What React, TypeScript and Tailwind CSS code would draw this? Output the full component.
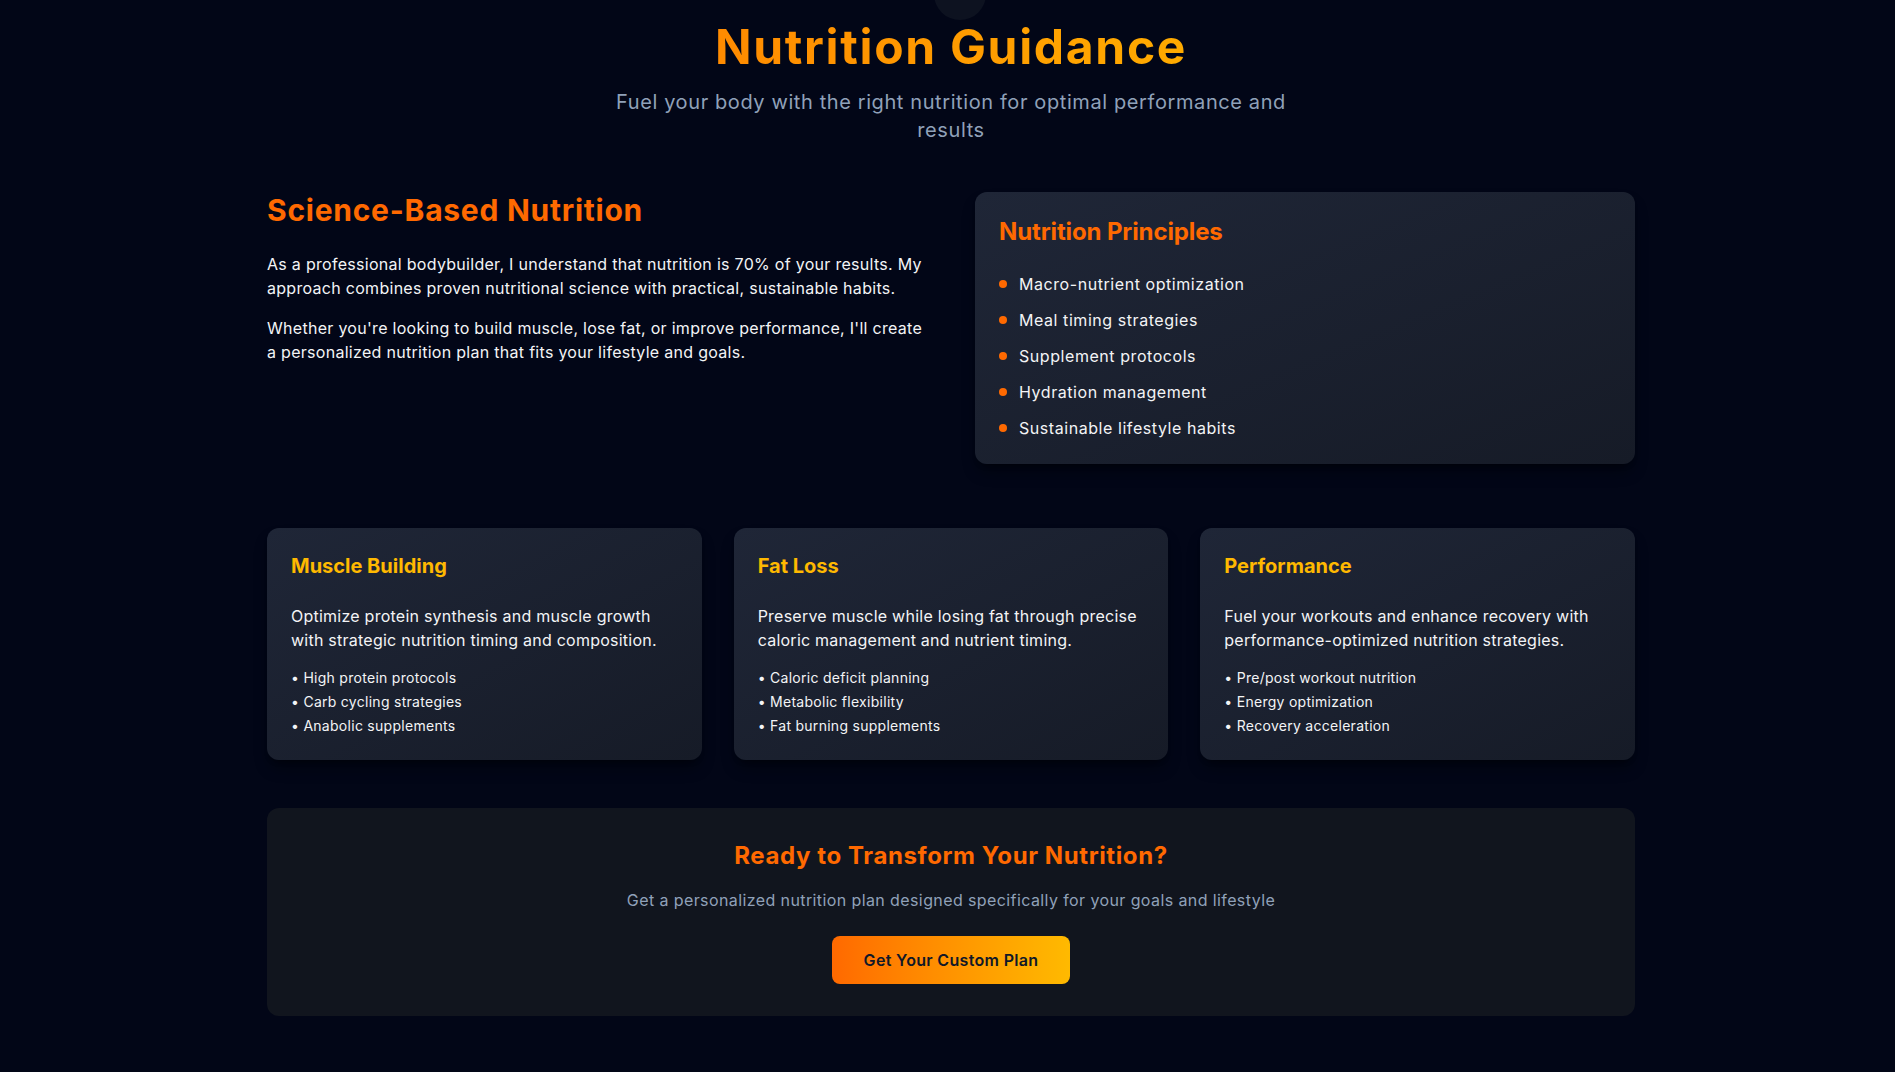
const PRINCIPLES = [
  'Macro-nutrient optimization',
  'Meal timing strategies',
  'Supplement protocols',
  'Hydration management',
  'Sustainable lifestyle habits',
];

type Goal = {
  title: string;
  text: string;
  points: string[];
};

const GOALS: Goal[] = [
  {
    title: 'Muscle Building',
    text: 'Optimize protein synthesis and muscle growth with strategic nutrition timing and composition.',
    points: ['High protein protocols', 'Carb cycling strategies', 'Anabolic supplements'],
  },
  {
    title: 'Fat Loss',
    text: 'Preserve muscle while losing fat through precise caloric management and nutrient timing.',
    points: ['Caloric deficit planning', 'Metabolic flexibility', 'Fat burning supplements'],
  },
  {
    title: 'Performance',
    text: 'Fuel your workouts and enhance recovery with performance-optimized nutrition strategies.',
    points: ['Pre/post workout nutrition', 'Energy optimization', 'Recovery acceleration'],
  },
];

function GoalCard({ goal }: { goal: Goal }) {
  return (
    <div className="rounded-xl bg-gradient-to-br from-[#1f2637] to-[#161b27] p-6 shadow-lg shadow-black/40">
      <h4 className="mb-6 text-xl font-bold leading-7 tracking-normal text-amber-400">{goal.title}</h4>
      <p className="mb-4 text-base leading-6 tracking-[0.015em] text-gray-100">{goal.text}</p>
      <ul className="space-y-1 text-sm leading-5 tracking-[0.02em] text-gray-100">
        {goal.points.map((p) => (
          <li key={p}>• {p}</li>
        ))}
      </ul>
    </div>
  );
}

export default function App() {
  return (
    <div className="relative min-h-screen overflow-hidden bg-[#020617] font-['Inter','Noto_Sans',sans-serif] text-white">
      {/* decorative circle peeking in at the top */}
      <div className="absolute left-[934px] top-[-32px] h-[52px] w-[52px] rounded-full bg-[#0d1220]" />

      <section className="relative pl-[7px]" aria-label="Nutrition guidance">
        <div className="mx-auto w-[1368px] pt-[23px] pb-14">
          <header className="mb-12 text-center">
            <h2 className="mb-[17px] bg-gradient-to-r from-orange-500 to-yellow-400 bg-clip-text text-5xl font-bold leading-none tracking-[0.035em] text-transparent">
              Nutrition Guidance
            </h2>
            <p className="mx-auto max-w-2xl text-xl leading-7 tracking-[0.03em] text-slate-400">
              Fuel your body with the right nutrition for optimal performance and results
            </p>
          </header>

          <div className="mb-16 grid grid-cols-2 items-start gap-12">
            <div>
              <h3 className="mb-6 text-3xl font-bold leading-9 tracking-[0.025em] text-orange-500">
                Science-Based Nutrition
              </h3>
              <div className="space-y-4 text-base leading-6 tracking-[0.018em] text-gray-100">
                <p>
                  As a professional bodybuilder, I understand that nutrition is 70% of your results. My
                  approach combines proven nutritional science with practical, sustainable habits.
                </p>
                <p>
                  Whether you're looking to build muscle, lose fat, or improve performance, I'll create a
                  personalized nutrition plan that fits your lifestyle and goals.
                </p>
              </div>
            </div>

            <div className="rounded-xl bg-gradient-to-br from-[#1f2637] to-[#161b27] p-6 shadow-lg shadow-black/40">
              <h3 className="mb-6 text-2xl font-bold leading-8 tracking-[-0.005em] text-orange-500">
                Nutrition Principles
              </h3>
              <ul className="space-y-3 text-base leading-6 tracking-[0.035em] text-gray-100">
                {PRINCIPLES.map((p) => (
                  <li key={p} className="flex items-center gap-3">
                    <span className="h-2 w-2 rounded-full bg-orange-500" />
                    {p}
                  </li>
                ))}
              </ul>
            </div>
          </div>

          <div className="mb-12 grid grid-cols-3 gap-8">
            {GOALS.map((g) => (
              <GoalCard key={g.title} goal={g} />
            ))}
          </div>

          <div className="rounded-xl bg-[#11151e] p-8 text-center">
            <h3 className="mb-4 text-2xl font-bold leading-8 tracking-[0.025em] text-orange-500">
              Ready to Transform Your Nutrition?
            </h3>
            <p className="mb-6 text-base leading-6 tracking-[0.025em] text-slate-400">
              Get a personalized nutrition plan designed specifically for your goals and lifestyle
            </p>
            <button className="rounded-lg bg-gradient-to-r from-orange-500 to-amber-400 px-8 py-3 text-base font-semibold leading-6 tracking-[0.02em] text-gray-900">
              Get Your Custom Plan
            </button>
          </div>
        </div>
      </section>
    </div>
  );
}
